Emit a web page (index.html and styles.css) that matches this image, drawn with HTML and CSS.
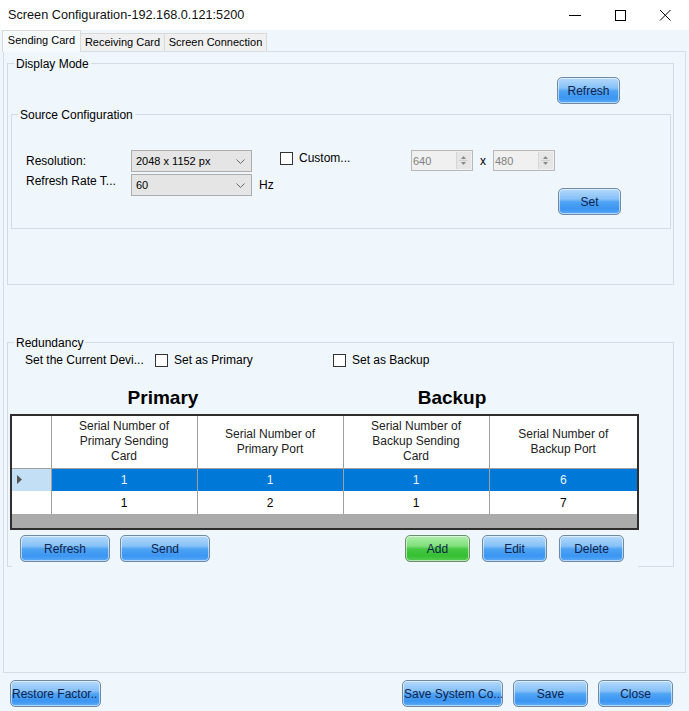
FILE: index.html
```html
<!DOCTYPE html>
<html lang="en">
<head>
    <meta charset="UTF-8">
    <title>Screen Configuration</title>
    <link rel="stylesheet" href="styles.css">
</head>
<body>

<div class="window">
    <div class="titlebar">
        <span class="title">Screen Configuration-192.168.0.121:5200</span>
        <div class="win-controls">
            <span class="win-btn">
                <svg width="12" height="12" viewBox="0 0 12 12"><path d="M0 6.5 H12" stroke="#000" stroke-width="1"/></svg>
            </span>
            <span class="win-btn">
                <svg width="12" height="12" viewBox="0 0 12 12"><rect x="1.5" y="1.5" width="10" height="10" fill="none" stroke="#000" stroke-width="1"/></svg>
            </span>
            <span class="win-btn">
                <svg width="12" height="12" viewBox="0 0 12 12"><path d="M1 1 L11.5 11.5 M11.5 1 L1 11.5" stroke="#000" stroke-width="1"/></svg>
            </span>
        </div>
    </div>

    <div class="tabs">
        <div class="tab active tab-sending">Sending Card</div>
        <div class="tab tab-receiving">Receiving Card</div>
        <div class="tab tab-connection">Screen Connection</div>
    </div>

    <div class="tab-page">
        <!-- Display Mode -->
        <div class="group display-mode">
            <span class="group-title">Display Mode</span>
            <div class="refresh-row">
                <button class="btn btn-small">Refresh</button>
            </div>

            <div class="group source-config">
                <span class="group-title">Source Configuration</span>
                <div class="source-grid">
                    <span class="label label-res">Resolution:</span>
                    <div class="select">
                        <span>2048 x 1152 px</span>
                        <svg width="9" height="5" viewBox="0 0 9 5"><path d="M0.5 0.5 L4.5 4.5 L8.5 0.5" fill="none" stroke="#666"/></svg>
                    </div>
                    <div class="custom-row">
                        <span class="checkbox"></span>
                        <span class="custom-text">Custom...</span>
                        <div class="spin">
                            <span>640</span>
                            <span class="spin-arrows">
                                <svg width="13" height="17" viewBox="0 0 13 17"><path d="M4 7 L6.5 4 L9 7 Z" fill="#888"/><path d="M2 8.5 H11" stroke="#cfcfcf"/><path d="M4 10 L9 10 L6.5 13 Z" fill="#888"/></svg>
                            </span>
                        </div>
                        <span class="times">x</span>
                        <div class="spin">
                            <span>480</span>
                            <span class="spin-arrows">
                                <svg width="13" height="17" viewBox="0 0 13 17"><path d="M4 7 L6.5 4 L9 7 Z" fill="#888"/><path d="M2 8.5 H11" stroke="#cfcfcf"/><path d="M4 10 L9 10 L6.5 13 Z" fill="#888"/></svg>
                            </span>
                        </div>
                    </div>

                    <span class="label label-rate">Refresh Rate T...</span>
                    <div class="select select-rate">
                        <span>60</span>
                        <svg width="9" height="5" viewBox="0 0 9 5"><path d="M0.5 0.5 L4.5 4.5 L8.5 0.5" fill="none" stroke="#666"/></svg>
                    </div>
                    <span class="hz">Hz</span>
                    <button class="btn btn-small btn-set">Set</button>
                </div>
            </div>
        </div>

        <!-- Redundancy -->
        <div class="group redundancy">
            <span class="group-title">Redundancy</span>
            <div class="device-row">
                <span class="device-label">Set the Current Devi...</span>
                <span class="check-item check-primary"><span class="checkbox"></span>Set as Primary</span>
                <span class="check-item"><span class="checkbox"></span>Set as Backup</span>
            </div>

            <div class="headings">
                <span class="heading heading-primary">Primary</span>
                <span class="heading heading-backup">Backup</span>
            </div>

            <div class="grid-wrap">
                <table class="grid">
                    <thead>
                        <tr>
                            <th class="rowhead"></th>
                            <th>Serial Number of<br>Primary Sending<br>Card</th>
                            <th>Serial Number of<br>Primary Port</th>
                            <th>Serial Number of<br>Backup Sending<br>Card</th>
                            <th class="last">Serial Number of<br>Backup Port</th>
                        </tr>
                    </thead>
                    <tbody>
                        <tr class="selected">
                            <td class="rowhead"><svg width="6" height="9" viewBox="0 0 6 9"><path d="M0 0 L5 4.5 L0 9 Z" fill="#555"/></svg></td>
                            <td>1</td>
                            <td>1</td>
                            <td>1</td>
                            <td class="last">6</td>
                        </tr>
                        <tr>
                            <td class="rowhead"></td>
                            <td>1</td>
                            <td>2</td>
                            <td>1</td>
                            <td class="last">7</td>
                        </tr>
                    </tbody>
                </table>
            </div>

            <div class="grid-buttons">
                <button class="btn btn-wide">Refresh</button>
                <button class="btn btn-wide">Send</button>
                <button class="btn btn-mid btn-green btn-add">Add</button>
                <button class="btn btn-mid">Edit</button>
                <button class="btn btn-mid">Delete</button>
            </div>
        </div>
    </div>

    <div class="footer">
        <button class="btn btn-restore btn-clip">Restore Factor..</button>
        <button class="btn btn-savesys btn-clip">Save System Co...</button>
        <button class="btn btn-foot">Save</button>
        <button class="btn btn-foot">Close</button>
    </div>
</div>

</body>
</html>
```

FILE: styles.css
```css
* {
    box-sizing: border-box;
}
body {
    margin: 0;
    background-color: #eff6fc;
    font-family: "Liberation Sans", Arial, sans-serif;
    font-size: 12px;
    color: #000;
}
.window {
    width: 689px;
    height: 711px;
    overflow: hidden;
}

/* title bar */
.titlebar {
    height: 30px;
    background-color: #fff;
    display: flex;
    align-items: center;
    justify-content: space-between;
}
.title {
    padding-left: 8px;
    font-size: 12.7px;
    color: #111;
}
.win-controls {
    display: flex;
    align-self: stretch;
    padding-right: 2px;
}
.win-btn {
    width: 45px;
    display: flex;
    align-items: center;
    justify-content: center;
}

/* tabs */
.tabs {
    display: flex;
    align-items: flex-end;
    height: 21px;
    padding-left: 2px;
}
.tab {
    height: 18px;
    line-height: 16px;
    font-size: 11px;
    text-align: center;
    background-color: #f0f0f0;
    border: 1px solid #d9d9d9;
    border-bottom: none;
    border-left: none;
}
.tab.active {
    height: 22px;
    line-height: 18px;
    margin-bottom: -1px;
    background-color: #f7fafd;
    border-left: 1px solid #d9d9d9;
    position: relative;
    z-index: 1;
}
.tab-sending { width: 79px; }
.tab-receiving { width: 84px; }
.tab-connection { width: 102px; }

.tab-page {
    margin-left: 3px;
    width: 683px;
    height: 622px;
    border: 1px solid #d6dde4;
    background-color: #eff6fc;
}

/* group boxes */
.group {
    border: 1px solid #d3dce3;
}
.group-title {
    display: block;
    width: fit-content;
    margin: -7px 0 0 6px;
    padding: 0 2px;
    line-height: 14px;
    background-color: #eff6fc;
}
.display-mode {
    margin: 11px 0 0 3px;
    width: 667px;
    padding-bottom: 55px;
}
.refresh-row {
    display: flex;
    justify-content: flex-end;
    margin-top: 6px;
    padding-right: 53px;
}
.source-config {
    margin: 10px 0 0 3px;
    width: 660px;
    padding-bottom: 13px;
}
.source-grid {
    display: grid;
    grid-template-columns: 105px 121px 1fr;
    grid-template-rows: 22px 22px 17px;
    row-gap: 2px;
    margin-top: 28px;
    padding: 0 49px 0 14px;
}
.label {
    line-height: 14px;
}
.label-res {
    align-self: center;
}
.label-rate {
    grid-row: 2;
    grid-column: 1;
    align-self: start;
}
.select {
    display: flex;
    align-items: center;
    justify-content: space-between;
    height: 22px;
    padding: 0 6px 0 4px;
    background-color: #e5e5e5;
    border: 1px solid #adadad;
    font-size: 11px;
}
.select-rate {
    grid-row: 2;
    grid-column: 2;
}
.custom-row {
    display: flex;
    align-items: flex-start;
    padding-left: 28px;
}
.checkbox {
    display: inline-block;
    width: 13px;
    height: 13px;
    border: 1px solid #333;
    background-color: #fff;
    flex-shrink: 0;
}
.custom-row .checkbox {
    margin-top: 2px;
}
.custom-text {
    width: 118px;
    padding-left: 6px;
    line-height: 17px;
}
.spin {
    display: flex;
    align-items: center;
    justify-content: space-between;
    width: 62px;
    height: 21px;
    padding: 0 1px 0 1px;
    background-color: #f0f0f0;
    border: 1px solid #b8b8b8;
    font-size: 11px;
    color: #808080;
}
.spin-arrows {
    display: flex;
    width: 15px;
    height: 17px;
    background-color: #e6e6e6;
    border-left: 1px solid #d6d6d6;
}
.times {
    width: 20px;
    text-align: center;
    line-height: 22px;
}
.hz {
    grid-row: 2;
    grid-column: 3;
    align-self: center;
    justify-self: start;
    margin-left: 7px;
}
.btn-set {
    grid-row: 2 / 4;
    grid-column: 3;
    align-self: end;
    justify-self: end;
}

/* redundancy */
.redundancy {
    margin: 57px 0 0 3px;
    width: 667px;
    padding-bottom: 4px;
}
.device-row {
    display: flex;
    align-items: center;
    height: 16px;
    margin-top: 2px;
    padding-left: 17px;
}
.device-label {
    width: 130px;
}
.check-item {
    display: flex;
    align-items: center;
}
.check-item .checkbox {
    margin-right: 6px;
}
.check-primary {
    width: 178px;
}
.headings {
    display: flex;
    height: 20px;
    margin-top: 20px;
}
.heading {
    font-size: 19px;
    font-weight: bold;
    line-height: 20px;
    text-align: center;
}
.heading-primary { width: 310px; }
.heading-backup { width: 268px; }

.grid-wrap {
    margin: 6px 0 0 2px;
    width: 629px;
    height: 116px;
    border: 2px solid #2e2e2e;
    background-color: #ababab;
}
.grid {
    width: 625px;
    table-layout: fixed;
    border-collapse: collapse;
    background-color: #fff;
}
.grid th, .grid td {
    width: 146px;
    padding: 0;
    text-align: center;
    border-right: 1px solid #a0a0a0;
    font-size: 12px;
}
.grid th {
    height: 52px;
    line-height: 15px;
    font-weight: normal;
    color: #222;
    border-bottom: 1px solid #a0a0a0;
}
.grid td {
    height: 23px;
}
.grid .rowhead {
    width: 39px;
    text-align: left;
    padding-left: 5px;
}
.grid .last {
    width: 148px;
    border-right: none;
}
.grid tr.selected td {
    background-color: #0078d7;
    color: #eaf4ff;
}
.grid tr.selected td.rowhead {
    background-color: #c2dff5;
}
.grid td.rowhead svg {
    display: block;
}

/* button strip covers the group's bottom border, as in the original */
.grid-buttons {
    display: flex;
    width: 626px;
    margin: 5px 0 -5px 4px;
    padding: 0 0 5px 8px;
    background-color: #eff6fc;
}
.grid-buttons .btn {
    margin-right: 10px;
}
.grid-buttons .btn-mid {
    margin-right: 12px;
}
.grid-buttons .btn-add {
    margin-left: 185px;
}

/* buttons */
.btn {
    height: 27px;
    padding: 0;
    font-family: "Liberation Sans", Arial, sans-serif;
    font-size: 12px;
    color: #10224a;
    border: 1px solid #6e8aa5;
    border-radius: 5px;
    background: linear-gradient(to bottom, #b4d9fb 0%, #86c1f8 40%, #4ea3f4 52%, #3b95f2 80%, #5dabf6 100%);
    box-shadow: inset 0 0 0 1px rgba(255, 255, 255, 0.55);
    cursor: pointer;
}
.btn-green {
    border-color: #6a8f6a;
    background: linear-gradient(to bottom, #b0eead 0%, #7fdf7b 40%, #45c842 52%, #36bf33 80%, #58cf55 100%);
}
.btn-small { width: 63px; }
.btn-wide { width: 90px; }
.btn-mid { width: 65px; }
.btn-foot { width: 75px; }
.btn-restore { width: 91px; }
.btn-savesys { width: 101px; }
.btn-clip {
    text-align: left;
    padding-left: 1px;
    white-space: nowrap;
    overflow: hidden;
}

/* footer */
.footer {
    display: flex;
    margin-top: 7px;
    padding: 0 16px 0 10px;
}
.footer .btn + .btn {
    margin-left: 10px;
}
.footer .btn.btn-savesys {
    margin-left: auto;
}
```
